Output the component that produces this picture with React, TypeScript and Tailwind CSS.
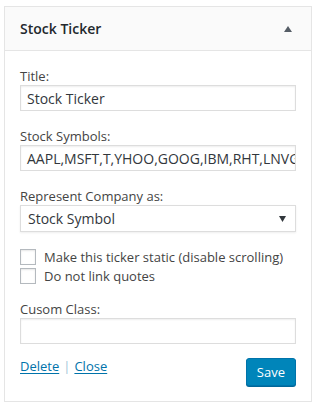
import React from "react";

export default function App() {
  const font = { fontFamily: '"Open Sans", "Noto Sans", sans-serif' };
  return (
    <div className="w-[317px] h-[408px] bg-white pt-[6px] pl-[4px]" style={font}>
      <div className="w-[308px] border border-[#e5e5e5] bg-white">
        <div className="h-[44px] bg-[#fafafa] border-b border-[#e5e5e5] flex items-center justify-between pl-[15px] pr-[19px]">
          <span className="text-[14px] font-semibold text-[#23282d] leading-none">Stock Ticker</span>
          <svg width="8" height="6" viewBox="0 0 8 6" className="block">
            <path d="M0 6 L4 0 L8 6 Z" fill="#555d66" />
          </svg>
        </div>
        <div className="px-[15px] pt-[16px] pb-[15px] text-[#444] text-[13px]">
          <div className="leading-[18px]">Title:</div>
          <div className="h-[26px] border border-[#ddd] shadow-[inset_0_1px_2px_rgba(0,0,0,0.07)] px-[6px] flex items-center text-[14px] text-[#32373c] overflow-hidden whitespace-nowrap">
            Stock Ticker
          </div>

          <div className="leading-[18px] mt-[16px]">Stock Symbols:</div>
          <div className="h-[26px] border border-[#ddd] shadow-[inset_0_1px_2px_rgba(0,0,0,0.07)] px-[6px] flex items-center text-[14px] text-[#32373c] overflow-hidden whitespace-nowrap">
            AAPL,MSFT,T,YHOO,GOOG,IBM,RHT,LNVG
          </div>

          <div className="leading-[18px] mt-[16px]">Represent Company as:</div>
          <div className="h-[27px] border border-[#ddd] shadow-[0_1px_2px_rgba(0,0,0,0.07)] pl-[7px] pr-[9px] flex items-center justify-between text-[14px] text-[#32373c]">
            <span>Stock Symbol</span>
            <svg width="7" height="6" viewBox="0 0 7 6" className="block">
              <path d="M0 0 L7 0 L3.5 6 Z" fill="#32373c" />
            </svg>
          </div>

          <div className="mt-[17px] flex items-center h-[16px] gap-[8px]">
            <div className="w-[16px] h-[16px] border border-[#b4b9be] bg-white shadow-[inset_0_1px_2px_rgba(0,0,0,0.1)]" />
            <span className="leading-[16px]">Make this ticker static (disable scrolling)</span>
          </div>
          <div className="mt-[3px] flex items-center h-[16px] gap-[8px]">
            <div className="w-[16px] h-[16px] border border-[#b4b9be] bg-white shadow-[inset_0_1px_2px_rgba(0,0,0,0.1)]" />
            <span className="leading-[16px]">Do not link quotes</span>
          </div>

          <div className="leading-[18px] mt-[16px]">Cusom Class:</div>
          <div className="h-[26px] border border-[#ddd] shadow-[inset_0_1px_2px_rgba(0,0,0,0.07)]" />

          <div className="mt-[14px] flex items-start justify-between">
            <div className="leading-[18px] text-[#0073aa] -mt-[1px]">
              <span className="underline underline-offset-2">Delete</span>
              <span className="text-[#a0c4d8] mx-[4px]">|</span>
              <span className="underline underline-offset-2">Close</span>
            </div>
            <div className="h-[28px] px-[10px] rounded-[3px] bg-[#0085ba] border border-[#0073aa] shadow-[0_1px_0_#006799] text-white text-[13px] flex items-center leading-none">
              Save
            </div>
          </div>
        </div>
      </div>
    </div>
  );
}
